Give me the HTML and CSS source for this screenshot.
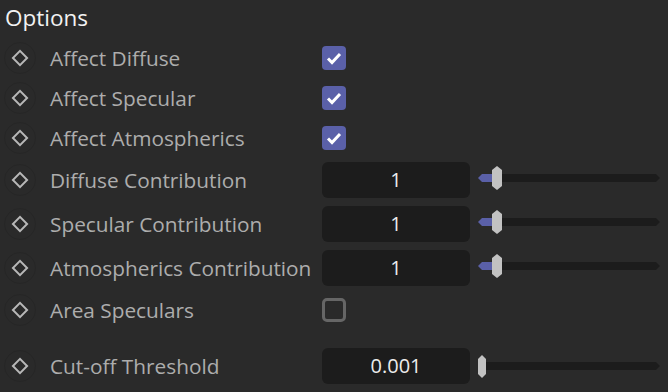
FILE: index.html
```html
<!DOCTYPE html>
<html lang="en">
<head>
    <meta name="viewport" content="width=device-width, initial-scale=1.0">
    <title>Options</title>
    <link rel="stylesheet" href="styles.css">
</head>
<body>
    <div class="panel">
        <h1 class="title">Options</h1>

        <div class="row">
            <span class="key"><span class="diamond"></span></span>
            <span class="label">Affect Diffuse</span>
            <span class="check on"><svg viewBox="0 0 24 24"><path d="M6 12.5l4 4 8-8.5"/></svg></span>
        </div>
        <div class="row">
            <span class="key"><span class="diamond"></span></span>
            <span class="label">Affect Specular</span>
            <span class="check on"><svg viewBox="0 0 24 24"><path d="M6 12.5l4 4 8-8.5"/></svg></span>
        </div>
        <div class="row">
            <span class="key"><span class="diamond"></span></span>
            <span class="label">Affect Atmospherics</span>
            <span class="check on"><svg viewBox="0 0 24 24"><path d="M6 12.5l4 4 8-8.5"/></svg></span>
        </div>

        <div class="row tall">
            <span class="key"><span class="diamond"></span></span>
            <span class="label">Diffuse Contribution</span>
            <span class="field">1</span>
            <div class="slider">
                <span class="track"></span>
                <span class="fill"></span>
                <span class="knob"></span>
            </div>
        </div>
        <div class="row tall">
            <span class="key"><span class="diamond"></span></span>
            <span class="label">Specular Contribution</span>
            <span class="field">1</span>
            <div class="slider">
                <span class="track"></span>
                <span class="fill"></span>
                <span class="knob"></span>
            </div>
        </div>
        <div class="row tall">
            <span class="key"><span class="diamond"></span></span>
            <span class="label">Atmospherics Contribution</span>
            <span class="field">1</span>
            <div class="slider">
                <span class="track"></span>
                <span class="fill"></span>
                <span class="knob"></span>
            </div>
        </div>

        <div class="row">
            <span class="key"><span class="diamond"></span></span>
            <span class="label">Area Speculars</span>
            <span class="check"></span>
        </div>

        <div class="row spaced">
            <span class="key"><span class="diamond"></span></span>
            <span class="label">Cut-off Threshold</span>
            <span class="field">0.001</span>
            <div class="slider empty">
                <span class="track"></span>
                <span class="knob"></span>
            </div>
        </div>
    </div>
</body>
</html>
```

FILE: styles.css
```css
* {
    margin: 0;
    padding: 0;
    box-sizing: border-box;
}

:root {
    --bg-color: #2a2a2a;
    --label-color: #adadad;
    --accent: #5a60a8;
    --field-bg: #1c1c1c;
}

body {
    background-color: var(--bg-color);
    font-family: "Open Sans", "Noto Sans", sans-serif;
    width: 668px;
    height: 392px;
    overflow: hidden;
}

.panel {
    display: flex;
    flex-direction: column;
}

.title {
    color: #f2f2f2;
    font-size: 22.5px;
    font-weight: normal;
    line-height: 36px;
    height: 38px;
    padding-left: 5px;
}

.row {
    display: flex;
    align-items: center;
    height: 40px;
}

.row.tall {
    height: 44px;
}

.row.spaced {
    margin-top: 16px;
}

.key {
    width: 32px;
    height: 32px;
    margin-left: 4px;
    border: 1px solid #262626;
    border-radius: 50%;
    display: flex;
    align-items: center;
    justify-content: center;
}

.diamond {
    width: 12px;
    height: 12px;
    border: 2px solid #b8b8b8;
    transform: rotate(45deg);
}

.label {
    width: 272px;
    margin-left: 14px;
    color: var(--label-color);
    font-size: 20.8px;
    white-space: nowrap;
}

.check {
    width: 24px;
    height: 24px;
    border: 3px solid #666;
    border-radius: 5px;
}

.check.on {
    border: none;
    border-radius: 4px;
    background-color: var(--accent);
}

.check svg {
    display: block;
    width: 24px;
    height: 24px;
    fill: none;
    stroke: #fff;
    stroke-width: 3;
}

.field {
    width: 148px;
    height: 36px;
    line-height: 36px;
    border-radius: 6px;
    background-color: var(--field-bg);
    color: #ececec;
    font-size: 20px;
    text-align: center;
}

.slider {
    position: relative;
    width: 182px;
    height: 24px;
    margin-left: 8px;
    margin-bottom: 4px;
}

.track {
    position: absolute;
    left: 4px;
    right: 0;
    top: 8px;
    height: 8px;
    background-color: #1c1c1c;
    clip-path: polygon(0 0, calc(100% - 4px) 0, 100% 50%, calc(100% - 4px) 100%, 0 100%);
}

.fill {
    position: absolute;
    left: 0;
    top: 8px;
    width: 17px;
    height: 8px;
    background-color: var(--accent);
    clip-path: polygon(4px 0, 100% 0, 100% 100%, 4px 100%, 0 50%);
}

.knob {
    position: absolute;
    left: 14px;
    top: 0;
    width: 10px;
    height: 24px;
    background-color: #c2c2c2;
    clip-path: polygon(50% 0, 100% 4px, 100% calc(100% - 4px), 50% 100%, 0 calc(100% - 4px), 0 4px);
}

.slider.empty {
    margin-bottom: 0;
}

.slider.empty .knob {
    left: 0;
    top: 1px;
    width: 8px;
    height: 23px;
}
```
